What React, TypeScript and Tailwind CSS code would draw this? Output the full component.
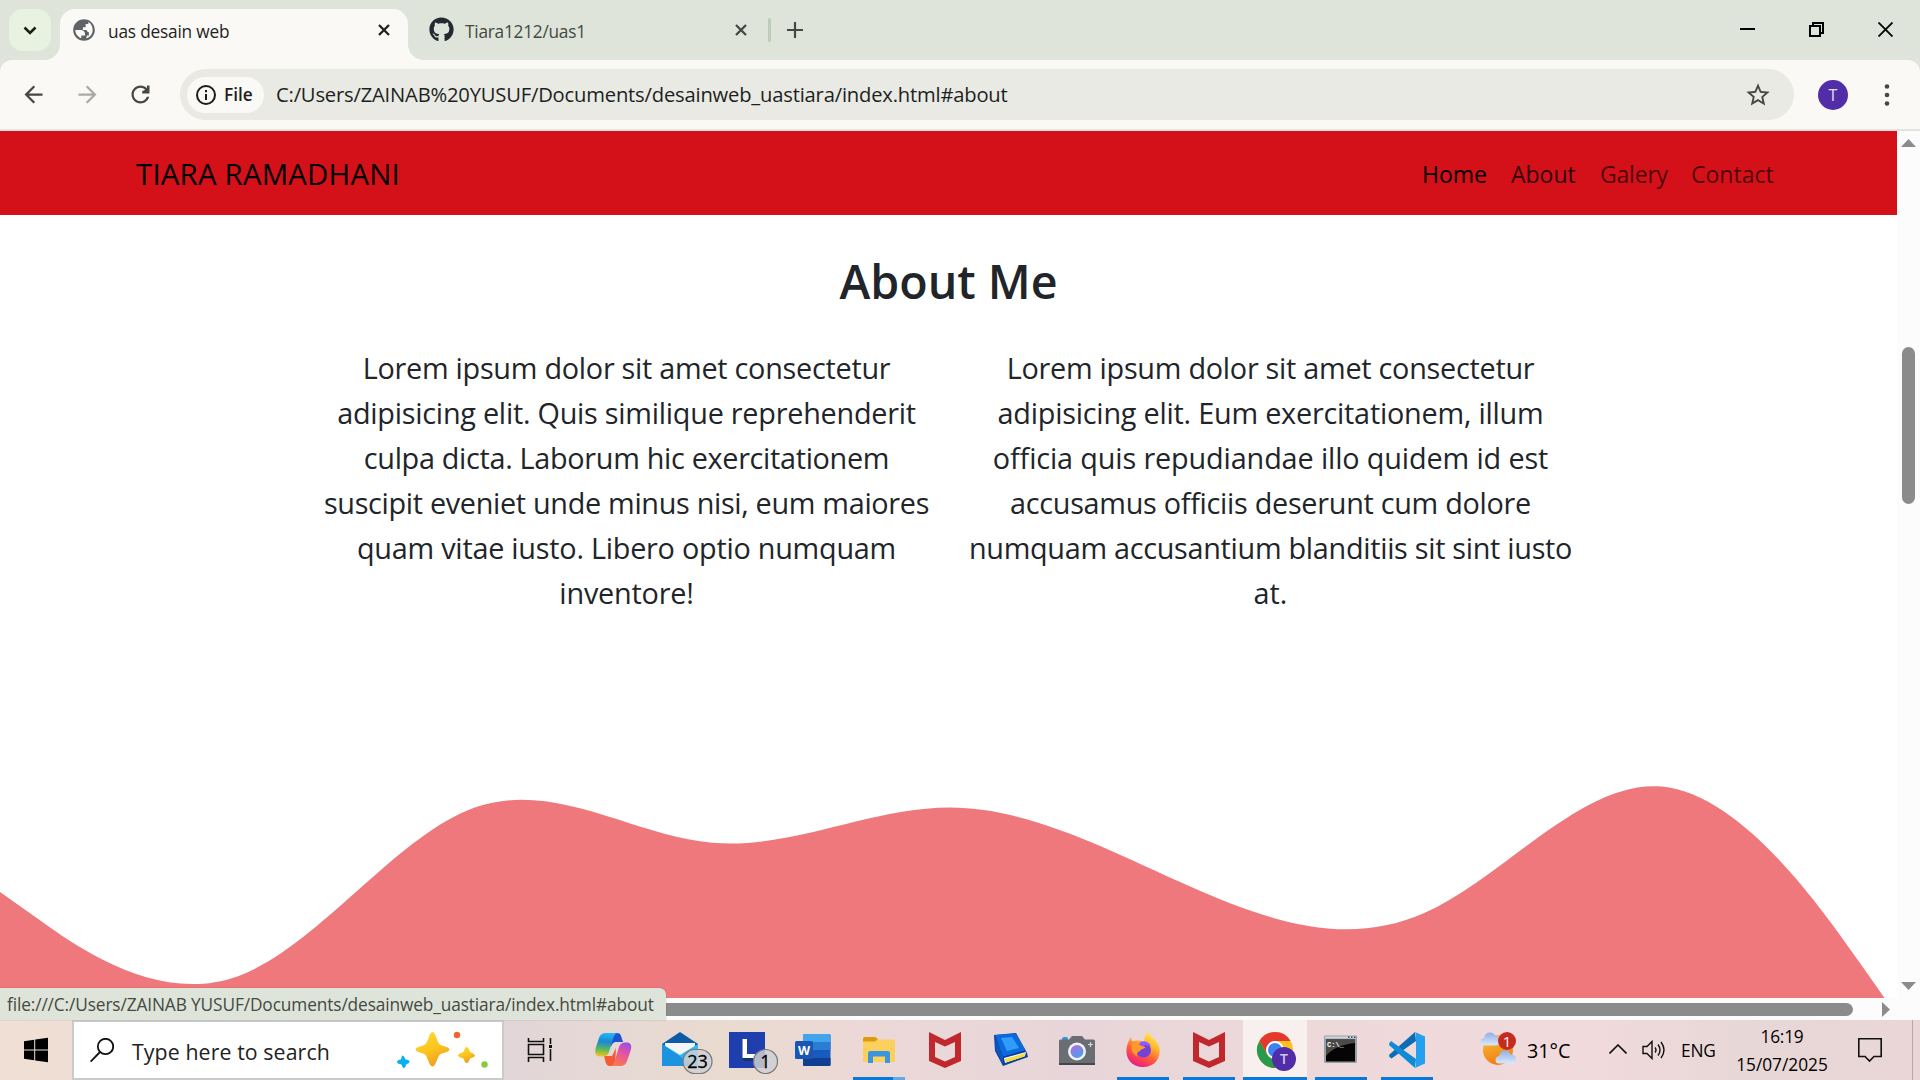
import type { ReactNode } from 'react';
import { FaGithub } from 'react-icons/fa';

const leftLines = [
  { text: 'Lorem ipsum dolor sit amet consectetur', tracking: 'tracking-[-0.26px]' },
  { text: 'adipisicing elit. Quis similique reprehenderit', tracking: 'tracking-[-0.24px]' },
  { text: 'culpa dicta. Laborum hic exercitationem', tracking: 'tracking-[-0.31px]' },
  { text: 'suscipit eveniet unde minus nisi, eum maiores', tracking: 'tracking-[-0.31px]' },
  { text: 'quam vitae iusto. Libero optio numquam', tracking: 'tracking-[-0.24px]' },
  { text: 'inventore!', tracking: 'tracking-[-0.2px]' },
];

const rightLines = [
  { text: 'Lorem ipsum dolor sit amet consectetur', tracking: 'tracking-[-0.26px]' },
  { text: 'adipisicing elit. Eum exercitationem, illum', tracking: 'tracking-[-0.22px]' },
  { text: 'officia quis repudiandae illo quidem id est', tracking: 'tracking-[-0.13px]' },
  { text: 'accusamus officiis deserunt cum dolore', tracking: 'tracking-[-0.28px]' },
  { text: 'numquam accusantium blanditiis sit sint iusto', tracking: 'tracking-[-0.29px]' },
  { text: 'at.', tracking: 'tracking-normal' },
];

function Material({ d, size, className = '' }: { d: string; size: number; className?: string }) {
  return (
    <svg width={size} height={size} viewBox="0 0 24 24" fill="currentColor" className={`shrink-0 ${className}`}>
      <path d={d} />
    </svg>
  );
}

const GLOBE =
  'M12 2C6.48 2 2 6.48 2 12s4.48 10 10 10 10-4.48 10-10S17.52 2 12 2zM4 12h4.4c3.4 0 4.9 1.7 4.6 5.1H9.5v2.5C6.3 18.500 4 15.500 4 12zm9.900 7.700v-.7h.6v-2h2v-3c-1.100 0-2-.900-2-2h-3.500V9.500h2.500V6.500h2.500V4.700C18.500 6 20 8.800 20 12c0 3.800-2.600 6.900-6.100 7.700z';
const BACK = 'M20 11H7.83l5.59-5.59L12 4l-8 8 8 8 1.41-1.41L7.83 13H20v-2z';
const FORWARD = 'M12 4l-1.41 1.41L16.17 11H4v2h12.17l-5.58 5.59L12 20l8-8z';
const REFRESH =
  'M17.65 6.35C16.2 4.9 14.21 4 12 4c-4.42 0-7.99 3.58-7.99 8s3.57 8 7.99 8c3.73 0 6.84-2.55 7.73-6h-2.08c-.82 2.33-3.04 4-5.65 4-3.31 0-6-2.69-6-6s2.69-6 6-6c1.66 0 3.140.69 4.220 1.780L13.500 9v2H20V4h-2.200z';
const STAR =
  'M22 9.24l-7.19-.62L12 2 9.19 8.63 2 9.24l5.460 4.730L5.820 21 12 17.270 18.180 21l-1.630-7.030L22 9.240zM12 15.400l-3.760 2.270 1-4.280-3.320-2.880 4.380-.380L12 6.100l1.710 4.040 4.380.380-3.320 2.880 1 4.280L12 15.400z';

function CloseGlyph({ className }: { className: string }) {
  return (
    <svg width="12" height="12" viewBox="0 0 12 12" fill="none" stroke="currentColor" strokeWidth="2.300" className={className}>
      <path d="M1 1L11 11M11 1L1 11" />
    </svg>
  );
}

function TabStrip() {
  return (
    <div className="flex h-[60px] shrink-0 items-start bg-[#dee4d9] pl-[9px]">
      <div className="mt-[9px] flex size-[42px] items-center justify-center rounded-[14px] bg-[#e7f3e0]">
        <svg width="14" height="9" viewBox="0 0 14 9" fill="none" stroke="#1a1c18" strokeWidth="2.600">
          <path d="M1.500 1.500L7 7L12.500 1.500" />
        </svg>
      </div>
      <div className="relative mt-[9px] ml-[9px] flex h-[51px] w-[348px] items-center rounded-t-[15px] bg-[#faf9f5] pb-[9px] text-[#1f1f1f]">
        <div className="absolute bottom-0 -left-[15px] size-[15px] bg-[radial-gradient(circle_at_top_left,transparent_14.500px,#faf9f5_15px)]" />
        <div className="absolute -right-[15px] bottom-0 size-[15px] bg-[radial-gradient(circle_at_top_right,transparent_14.500px,#faf9f5_15px)]" />
        <Material d={GLOBE} size={26} className="ml-[11px] text-[#5f6368]" />
        <span className="ml-[11px] w-[270px] pt-[3px] text-[17.300px] leading-6 tracking-[-0.200px]">uas desain web</span>
        <CloseGlyph className="mr-[18px] shrink-0" />
      </div>
      <div className="flex h-[60px] items-center text-[#444a41]">
        <FaGithub size={25} className="mb-px ml-[21px] text-[#24292f]" />
        <span className="ml-[11px] w-[270px] pt-[3px] text-[17.300px] leading-6 tracking-[-0.250px]">Tiara1212/uas1</span>
        <CloseGlyph className="" />
        <div className="ml-[21px] h-6 w-[3px] rounded bg-[#bccdb8]" />
        <svg width="16" height="16" viewBox="0 0 16 16" stroke="#444a41" strokeWidth="2.200" className="ml-4">
          <path d="M8 0V16M0 8H16" />
        </svg>
      </div>
      <div className="ml-auto flex pt-[22px] pr-[27px]">
        <svg width="15" height="15" viewBox="0 0 15 15" stroke="#000" strokeWidth="2">
          <path d="M0 7H15" />
        </svg>
        <svg width="15" height="15" viewBox="0 0 15 15" fill="none" stroke="#000" strokeWidth="2" className="ml-[54px]">
          <path d="M1 4H11V14H1ZM4 4V1H14V11H11" />
        </svg>
        <svg width="15" height="15" viewBox="0 0 15 15" stroke="#000" strokeWidth="1.800" className="ml-[54px]">
          <path d="M0.500 0.500L14.500 14.500M14.500 0.500L0.500 14.500" />
        </svg>
      </div>
    </div>
  );
}

function Toolbar() {
  return (
    <div className="h-[71px] shrink-0 bg-[#dee4d9]">
      <div className="flex h-[71px] items-start rounded-t-xl border-b-2 border-[#e2e3df] bg-[#faf9f5] pt-[9px] text-[#444a41]">
        <div className="flex h-[51px] w-[180px] items-center pl-[19.500px]">
          <Material d={BACK} size={27} />
          <Material d={FORWARD} size={27} className="ml-[27px] text-[#a9aaa6]" />
          <Material d={REFRESH} size={27} className="ml-[26.500px]" />
        </div>
        <div className="flex h-[51px] w-[1614px] items-center rounded-full bg-[#e8eae3] pr-[22px] pl-[7px] text-[#1f1f1f]">
          <div className="flex h-9 w-[77px] items-center rounded-full bg-[#faf9f5] pl-[9px]">
            <svg width="20" height="20" viewBox="0 0 20 20" fill="none" stroke="#1a1c18" strokeWidth="2">
              <circle cx="10" cy="10" r="9" />
              <path d="M10 9V15M10 5V7.200" />
            </svg>
            <span className="ml-2 text-[17.300px] font-semibold leading-6">File</span>
          </div>
          <span className="ml-[12px] pb-[2px] text-[20.200px] leading-8 tracking-[-0.190px]">
            C:/Users/ZAINAB%20YUSUF/Documents/desainweb_uastiara/index.html#about
          </span>
          <Material d={STAR} size={28} className="ml-auto text-[#444a41]" />
        </div>
        <div className="mt-[11px] ml-6 flex size-[30px] items-center justify-center rounded-full bg-[#512da8] text-[16px] text-[#e5dcf5]">T</div>
        <svg width="6" height="24" viewBox="0 0 6 24" fill="#444a41" className="mt-[14px] ml-[36px]">
          <circle cx="3" cy="3.500" r="2.300" />
          <circle cx="3" cy="12" r="2.300" />
          <circle cx="3" cy="20.500" r="2.300" />
        </svg>
      </div>
    </div>
  );
}

function Paragraph({ lines }: { lines: { text: string; tracking: string }[] }) {
  return (
    <p className="w-[644px] text-center text-[28.800px] leading-[45px]">
      {lines.map((line) => (
        <span key={line.text} className={`block whitespace-nowrap ${line.tracking}`}>
          {line.text}
        </span>
      ))}
    </p>
  );
}

function WebPage() {
  return (
    <div className="flex h-[867px] w-[1897px] flex-col overflow-hidden bg-white text-[#212529]">
      <nav className="flex h-[84px] shrink-0 items-center justify-between bg-[#d41019] pr-[123px] pl-[136px] text-black">
        <span className="pt-[2px] text-[29.400px] leading-[45px] tracking-[0.200px]">TIARA RAMADHANI</span>
        <div className="flex pt-[2px] text-[23px] leading-9">
          <span className="w-[89px]">Home</span>
          <span className="w-[89px] text-black/80">About</span>
          <span className="w-[91px] tracking-[-0.200px] text-black/65">Galery</span>
          <span className="w-[83px] text-black/65">Contact</span>
        </div>
      </nav>
      <section className="mt-[37px] flex shrink-0 flex-col items-center">
        <h2 className="text-[46.600px] font-semibold leading-[58px]">About Me</h2>
        <div className="mt-[35px] flex">
          <Paragraph lines={leftLines} />
          <Paragraph lines={rightLines} />
        </div>
      </section>
      <svg width="1897" height="422" viewBox="0 0 1440 320" preserveAspectRatio="xMinYMin slice" className="mt-[65.500px] shrink-0">
        <path
          fill="#ef787c"
          d="M0,160L30,181.300C60,202.700,120,245.300,180,224C240,202.700,300,117.300,360,96C420,74.700,480,117.300,540,122.700C600,128,660,96,720,96C780,96,840,128,900,154.700C960,181.300,1020,202.700,1080,176C1140,149.300,1200,74.700,1260,80C1320,85.300,1380,170.700,1410,213.300L1440,256L1440,320L0,320Z"
        />
      </svg>
    </div>
  );
}

function Viewport() {
  return (
    <div className="relative h-[889px] shrink-0 bg-[#fcfcfc]">
      <div className="flex">
        <WebPage />
        <div className="flex h-[867px] w-[23px] flex-col items-center pt-[8px] pb-[8px]">
          <svg width="15" height="8" viewBox="0 0 15 8" fill="#8b8b8b">
            <path d="M0 8L7.500 0L15 8Z" />
          </svg>
          <div className="mt-[200px] h-[157px] w-[13px] rounded-full bg-[#8b8b8b]" />
          <svg width="15" height="8" viewBox="0 0 15 8" fill="#8b8b8b" className="mt-auto">
            <path d="M0 0L7.500 8L15 0Z" />
          </svg>
        </div>
      </div>
      <div className="flex h-[22px] items-center pl-[22px]">
        <div className="h-[13px] w-[1831px] rounded-full bg-[#8b8b8b]" />
        <svg width="8" height="15" viewBox="0 0 8 15" fill="#8b8b8b" className="ml-[29px]">
          <path d="M0 0L8 7.500L0 15Z" />
        </svg>
      </div>
      <div className="absolute bottom-0 left-0 flex h-8 w-[666px] items-center whitespace-nowrap rounded-tr-md bg-[#dee4d9] pt-[2px] pl-[7px] text-[17.300px] tracking-[-0.120px] text-[#444a41] shadow-[0_0_1px_#0008]">
        file:///C:/Users/ZAINAB YUSUF/Documents/desainweb_uastiara/index.html#about
      </div>
    </div>
  );
}

function Cell({ children, width = 66, active = false, bar = '' }: { children: ReactNode; width?: number; active?: boolean; bar?: string }) {
  return (
    <div className={`flex h-[60px] flex-col items-center ${active ? 'bg-[linear-gradient(90deg,transparent_1px,#f8efef_1px,#f8efef_65px,transparent_65px)]' : ''}`}>
      <svg width={width} height="57" viewBox={`0 0 ${width} 57`} fill="none">
        {children}
      </svg>
      {bar && <div className={`h-[3px] ${bar}`} />}
    </div>
  );
}

function CountBadge({ x, label, rx }: { x: number; label: string; rx: number }) {
  return (
    <>
      <rect x={x - rx} y="29.500" width={rx * 2} height="24" rx="12" fill="#cfcfd3" fillOpacity="0.850" stroke="#77777a" strokeWidth="1.200" />
      <text x={x} y="48" textAnchor="middle" fontSize="18" fill="#000" stroke="#000" strokeWidth="0.300">
        {label}
      </text>
    </>
  );
}

function McAfee() {
  return (
    <path fillRule="evenodd" fill="#c0282d" d="M17 12L33 20L49 12V41L33 48L17 41ZM23 22V37L33 41.500L43 37V22L33 26.500Z" />
  );
}

function Taskbar() {
  return (
    <div className="flex h-[60px] shrink-0 bg-[linear-gradient(90deg,#efdfd4_0%,#eeded5_4%,#e3d6d8_27%,#e9dbcf_38%,#ecd8d7_45%,#e7d5d9_56%,#eed9da_68%,#f1dadc_83%,#e7d7d6_91%,#ead6d7_100%)] text-black">
      <Cell width={72}>
        <path fill="#000" d="M24 21.200L34.200 19.700V29.400H24ZM35.200 19.500L48 17.700V29.400H35.200ZM24 30.400H34.200V40.300L24 38.800ZM35.200 30.400H48V42.300L35.200 40.500Z" />
      </Cell>
      <div className="flex h-[60px] w-[432px] items-center border-2 border-[#cbcbcb] bg-white pl-[16px]">
        <svg width="24" height="25" viewBox="0 0 24 25" fill="none" stroke="#111" strokeWidth="1.800">
          <circle cx="15.500" cy="8.500" r="7.700" />
          <path d="M10 14L0.600 23.600" />
        </svg>
        <span className="ml-[18px] pt-[3px] text-[21.300px] leading-7 tracking-[0.100px] text-[#222]">Type here to search</span>
        <svg width="94" height="44" viewBox="396 1028 94 44" className="ml-auto mr-[12px]">
          <defs>
            <linearGradient id="gold" x1="0" y1="0" x2="0.400" y2="1">
              <stop offset="0" stopColor="#ffdc3a" />
              <stop offset="0.600" stopColor="#fbc41c" />
              <stop offset="1" stopColor="#f3a022" />
            </linearGradient>
          </defs>
          <path fill="url(#gold)" d="M432.500 1032C436 1032 437 1043 440 1044.500C443 1046.500 449.500 1047 449.500 1049.500C449.500 1052 443 1052.500 440 1054.500C437 1057 436 1066.500 432.500 1066.500C429 1066.500 428 1057 425 1054.500C422 1052.500 415.500 1052 415.500 1049.500C415.500 1047 422 1046.500 425 1044.500C428 1043 429 1032 432.500 1032Z" />
          <path fill="url(#gold)" d="M466.500 1047Q468.500 1047 470 1052Q475 1054 475 1055.500Q475 1057 470 1058.500Q468.500 1063 466.500 1063Q465 1063 463.500 1058.500Q458 1057 458 1055Q458 1054 463.500 1052Q465 1047 466.500 1047Z" />
          <path fill="#0ab0ee" d="M402 1055.500Q404 1055.500 405.500 1059.500Q410 1060 409.500 1062Q409.500 1063 406 1064.500Q405.500 1068 403.500 1068Q402.500 1068 401.500 1064.500Q397 1063.500 397 1062Q397 1060 401 1059.500Z" />
          <circle cx="457" cy="1035" r="3.200" fill="#f2662b" />
          <circle cx="484.500" cy="1064.500" r="3.200" fill="#87cc3d" />
        </svg>
      </div>
      <Cell width={78}>
        <g stroke="#111" strokeWidth="1.600">
          <path d="M24.500 18V21.500H39.500V18M24.500 42V37.500H39.500V42M46.500 18V24M46.500 29V41" />
          <path d="M24.500 24.500H39.500V34.500H24.500Z" />
          <path d="M45 26.500H48" strokeWidth="3" />
        </g>
      </Cell>
      <Cell>
        <defs>
          <linearGradient id="cpA" x1="0.300" y1="0" x2="0.200" y2="1">
            <stop offset="0" stopColor="#22b8f0" />
            <stop offset="0.350" stopColor="#1c86d6" />
            <stop offset="0.650" stopColor="#52b565" />
            <stop offset="1" stopColor="#f6c813" />
          </linearGradient>
          <linearGradient id="cpB" x1="0.700" y1="0" x2="0.300" y2="1">
            <stop offset="0" stopColor="#a04be8" />
            <stop offset="0.450" stopColor="#e9559b" />
            <stop offset="1" stopColor="#fb7a4b" />
          </linearGradient>
        </defs>
        <path fill="#1f52d0" d="M29 13H35C38 13 39 15 40 19L41 22H35C31 22 30 24 29 27Z" />
        <path fill="#f25a38" d="M33 46H28C25 46 24 44 23 40L22 36H30L34 28Z" />
        <path fill="url(#cpA)" d="M24 13H36C33 13 32 16 31 19L27 32C26 35 24 36.500 21 36.500H18C13 36.500 12.500 32 14 27L17 18C18 15 20 13 24 13Z" />
        <path fill="url(#cpB)" d="M38 46H27C31 46 32 43 33 40L37 27C38 24 40 22.500 43 22.500H45C49.500 22.500 50 27 48.500 31L45 41C44 44 42 46 38 46Z" />
      </Cell>
      <Cell>
        <path fill="#0d5ba5" d="M14 24L32 12L50 24V34H14Z" />
        <path fill="#f3f5f7" d="M17 23H47V36H17Z" />
        <path fill="#2eb8f4" d="M14 24L32 35L50 24V46H14Z" />
        <path fill="#1b93de" d="M14 24L46 46H14Z" />
        <path fill="#f3f5f7" d="M18 23H46L32 34Z" />
        <CountBadge x={49.500} rx={14.500} label="23" />
      </Cell>
      <Cell>
        <rect x="15" y="12" width="36" height="36" fill="#1f3fae" />
        <path fill="#143568" d="M26 38L29 35V19L28 20V38L31 41H42L38 38Z" />
        <path fill="#fff" d="M28.500 19H33V34H41V38H28.500Z" />
        <CountBadge x={51.500} rx={12} label="1" />
      </Cell>
      <Cell>
        <rect x="23" y="14" width="27.500" height="32" rx="1.500" fill="#185abd" />
        <path fill="#41a5ee" d="M24.500 14H49Q50.500 14 50.500 15.500V22H23V15.500Q23 14 24.500 14Z" />
        <rect x="23" y="22" width="27.500" height="8" fill="#2b7cd3" />
        <path fill="#103f91" d="M23 38H50.500V44.500Q50.500 46 49 46H24.500Q23 46 23 44.500Z" />
        <rect x="15" y="21" width="18" height="18" rx="1.500" fill="#1a56b4" />
        <text x="24" y="34.500" textAnchor="middle" fontSize="12.500" fontWeight="700" fill="#fff">W</text>
      </Cell>
      <Cell bar="w-[52px] bg-[linear-gradient(90deg,#0a78d6_40px,#5faae6_40px)]">
        <path fill="#dd9a0b" d="M17 19Q17 17 19 17H29L32 19L29 23H17Z" />
        <path fill="#fcd05d" d="M17 21.500H29L32 19.500H47Q49 19.500 49 21V41Q49 42 48 42H18Q17 42 17 41Z" />
        <path fill="#3a96dd" d="M22 43V33Q22 31 24 31H42Q44 31 44 33V43H39V36.500H27V43Z" />
      </Cell>
      <Cell><McAfee /></Cell>
      <Cell>
        <path fill="#0a3f9e" d="M16 15L38 13L49 33L50 37L25 46L17 31Z" />
        <path fill="#fff" d="M26 38L48 32L47 36L27 43Z" />
        <path fill="#f5dd3a" d="M27 39L47.500 33L46.500 36.500L27.500 42.500Z" />
        <path fill="#0c6bdc" d="M17 15L37.500 13.500L47.500 30L25 36.500Z" />
        <path fill="#2f9dfb" d="M23 18L34 17L41 28L29 31Z" />
        <path fill="#0b55c0" d="M17 17L25 36.500V44L17.500 30Z" />
      </Cell>
      <Cell>
        <path fill="#2d9ad8" d="M18 20V18.500Q18 17 20 17H22.500Q24 17 24 18.500V20Z" />
        <path fill="#6a6e73" d="M15 21Q15 19.500 16.500 19.500H25L28 16H38L41 19.500H49.500Q51 19.500 51 21V44H15Z" />
        <rect x="15" y="43" width="36" height="2" fill="#43474b" />
        <circle cx="33" cy="31.500" r="9" fill="#f3f3f5" />
        <circle cx="33" cy="31.500" r="6.500" fill="url(#lens)" />
        <path stroke="#d5d7d9" strokeWidth="1.200" d="M46.500 22V27M44 24.500H49" />
        <defs>
          <linearGradient id="lens" x1="0.200" y1="0" x2="0.800" y2="1">
            <stop offset="0" stopColor="#b06ee0" />
            <stop offset="1" stopColor="#3fa4ee" />
          </linearGradient>
        </defs>
      </Cell>
      <Cell bar="w-[52px] bg-[#0a78d6]">
        <defs>
          <linearGradient id="fox" x1="0.800" y1="0" x2="0.300" y2="1">
            <stop offset="0" stopColor="#fff04a" />
            <stop offset="0.350" stopColor="#ffb52e" />
            <stop offset="0.650" stopColor="#ff5a3c" />
            <stop offset="1" stopColor="#e8178a" />
          </linearGradient>
        </defs>
        <path fill="url(#fox)" d="M38 12C40 17 48 20 49.500 28C51 39 44 47 33 47C22 47 15.500 39 16.500 29C17 24 19 20 21 17C21.500 20 22 21 23 21.500C26 20 31 20 34 22C34 17 36 14 38 12Z" />
        <circle cx="33.500" cy="30" r="7.500" fill="#7541d8" />
        <path fill="#9059ff" d="M30 22C34 20 39 22 41 26C37 25 33 25 30 27Z" />
        <path fill="#ff9a2a" d="M22 24C26 22 30 24 31 26C34 26 36 27 35 28C33 29 31 29 30 31C27 32 26 35 28 37C23 35 20 29 22 24Z" />
      </Cell>
      <Cell bar="w-[52px] bg-[#0a78d6]"><McAfee /></Cell>
      <Cell active bar="w-16 bg-[#0a78d6]">
        <circle cx="33" cy="30" r="18" fill="#fbc31e" />
        <path fill="#e5392e" d="M33 30V21H48.600A18 18 0 0 0 17.400 21L25.200 34.500Z" />
        <path fill="#2a9a4a" d="M17.400 21A18 18 0 0 0 33 48L40.800 34.500L33 39L25.200 34.500Z" />
        <circle cx="33" cy="30" r="9" fill="#fff" />
        <circle cx="33" cy="30" r="7" fill="#3c82f0" />
        <circle cx="42" cy="39" r="12" fill="#512da8" />
        <text x="42" y="44" textAnchor="middle" fontSize="14" fontWeight="600" fill="#d3c5ec">T</text>
      </Cell>
      <Cell bar="w-[52px] bg-[#0a78d6]">
        <rect x="16" y="15.500" width="33" height="27.500" rx="1" fill="#9aa1a6" />
        <rect x="17" y="16.500" width="31" height="2" fill="#cfd5d9" />
        <path stroke="#3f4a6a" strokeWidth="1.500" strokeDasharray="1.500 1.500" d="M40 17.200H48" />
        <rect x="18" y="19.500" width="29" height="22" fill="#050505" />
        <path fill="#4a4a4a" d="M18 19.500H47V23C35 24 23 29 18 36Z" />
        <text x="19" y="27" fontSize="7" fontWeight="700" fill="#fff" fontFamily="Liberation Mono">C:\_</text>
      </Cell>
      <Cell bar="w-[52px] bg-[#0a78d6]">
        <path fill="#0b6db5" d="M15.500 37Q14.500 35.500 15.500 34.500L41 12L42 21L17.500 38.500Z" />
        <path fill="#0f8ad6" d="M17 21L42 39L41 48L15.500 25.500Q14.500 24.500 15.500 23Z" />
        <path fill="#25a0ee" d="M41 12L51 16.500V43.500L41 48Q42 46 42 44V16Q42 13 41 12Z" />
      </Cell>
      <div className="ml-auto flex h-[60px]">
        <Cell width={50}>
          <defs>
            <linearGradient id="sun" x1="0.300" y1="0" x2="0.600" y2="1">
              <stop offset="0" stopColor="#f7bd30" />
              <stop offset="1" stopColor="#ef7a14" />
            </linearGradient>
            <linearGradient id="cloud" x1="0" y1="0" x2="0" y2="1">
              <stop offset="0" stopColor="#8fb0e8" />
              <stop offset="1" stopColor="#dbe8fb" />
            </linearGradient>
          </defs>
          <circle cx="27" cy="30" r="15" fill="url(#sun)" />
          <path fill="url(#cloud)" d="M14 25.500Q9.500 25 9.500 21.500Q9.500 18.500 13 18Q14 12.500 19 12.500Q23 12.500 24.500 16Q29 16 29 21Q29 25.500 24 25.500Z" />
          <path fill="url(#cloud)" d="M28 43.500Q24.500 43.500 24.500 40Q24.500 36.500 28 36Q29.500 30.500 34 30.500Q38.500 30.500 39.500 34.500Q45 34.500 45 39Q45 43.500 40 43.500Z" />
          <circle cx="36" cy="21" r="9" fill="#c62b1f" />
          <text x="36" y="26.500" textAnchor="middle" fontSize="15" fill="#fff">1</text>
        </Cell>
        <span className="w-[88px] pt-[17px] pl-[6px] text-[19.800px] leading-7">31°C</span>
        <svg width="18" height="10" viewBox="0 0 18 10" fill="none" stroke="#111" strokeWidth="1.600" className="mt-[24px]">
          <path d="M0.500 9.500L9 1L17.500 9.500" />
        </svg>
        <svg width="24" height="20" viewBox="0 0 24 20" fill="none" stroke="#111" strokeWidth="1.400" className="mt-5 ml-[15px]">
          <path d="M1 6.500H5L10 1.500V18.500L5 13.500H1Z" />
          <path d="M13 7.500Q15 10 13 12.500M16 4.500Q20 10 16 15.500M19 2Q25 10 19 18" />
        </svg>
        <span className="ml-[15px] w-[54px] pt-[17px] text-[17.300px] leading-7 tracking-[-0.200px]">ENG</span>
        <div className="flex w-[94px] flex-col items-center pt-[3px] text-[17.300px] leading-7">
          <span className="tracking-[-0.200px]">16:19</span>
          <span>15/07/2025</span>
        </div>
        <svg width="24" height="25" viewBox="0 0 24 25" fill="none" stroke="#111" strokeWidth="1.600" className="mt-[18px] ml-[29px]">
          <path d="M0.800 0.800H23.200V18.500H16L11.500 23L7 18.500H0.800Z" />
        </svg>
        <div className="ml-[30px] w-2 border-l border-[#b7a9a9]" />
      </div>
    </div>
  );
}

export default function App() {
  return (
    <div className="flex h-[1080px] w-[1920px] flex-col overflow-hidden font-['Open_Sans',sans-serif]">
      <TabStrip />
      <Toolbar />
      <Viewport />
      <Taskbar />
    </div>
  );
}
